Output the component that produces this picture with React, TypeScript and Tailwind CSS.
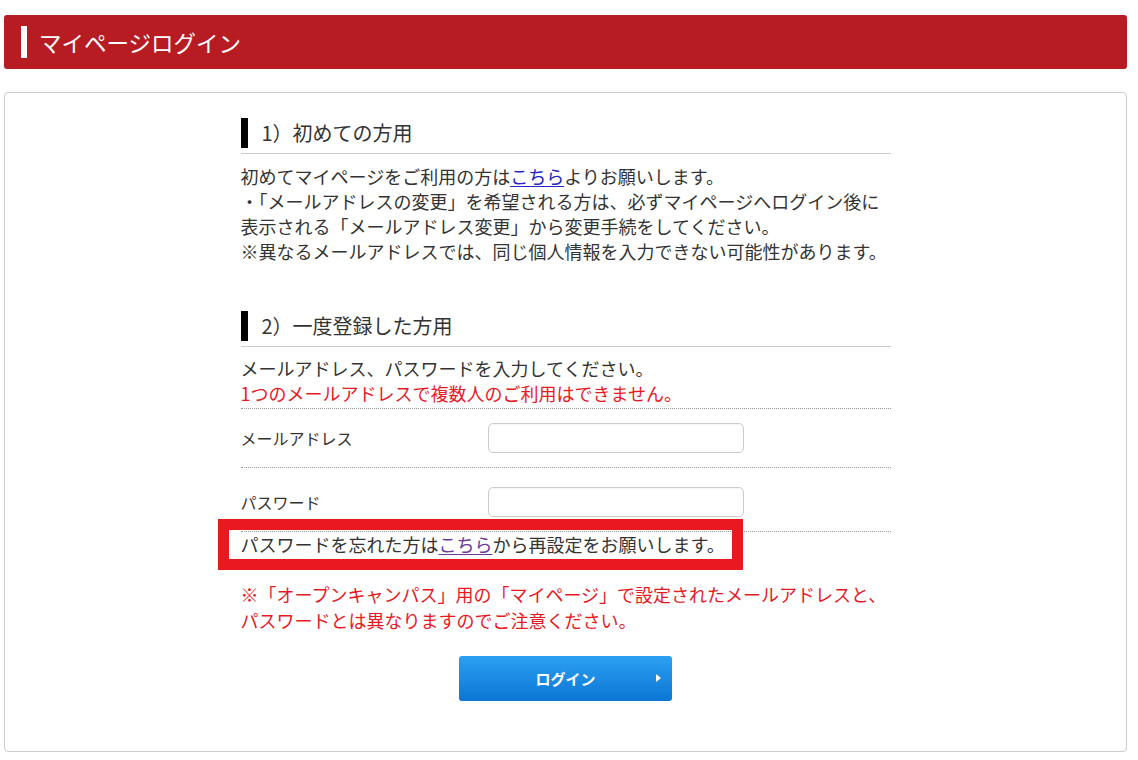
const FONT = "font-['Noto_Sans_CJK_JP','Noto_Sans',sans-serif]";

function SectionHeading({ children }: { children: React.ReactNode }) {
  return (
    <h3 className="border-b border-[#cccccc] pb-[5px]">
      <span className="flex items-center">
        <span className="h-[30px] w-[7px] bg-black" />
        <span className="ml-[14px] text-[20px] leading-[30px] text-[#333333]">
          {children}
        </span>
      </span>
    </h3>
  );
}

function FieldRow({
  label,
  type,
  className,
}: {
  label: string;
  type: string;
  className: string;
}) {
  return (
    <div
      className={`flex items-center border-b border-dotted border-[#999999] ${className}`}
    >
      <label className="w-[247px] text-[16px] leading-[24px] text-[#333333]">
        {label}
      </label>
      <input
        type={type}
        className="h-[30px] w-[256px] rounded-[5px] border border-[#cccccc] bg-white shadow-[inset_0_1px_1px_rgba(0,0,0,0.04)] outline-none"
      />
    </div>
  );
}

export default function App() {
  return (
    <div className={`${FONT} min-h-[760px] bg-white`}>
      <div className="ml-[4px] w-[1123px] pt-[15px]">
        <h2 className="flex h-[54px] items-center rounded-[3px] bg-[#b71c23] pl-[17px]">
          <span className="h-[32px] w-[6px] bg-white" />
          <span className="ml-[12px] text-[22.5px] leading-[32px] text-white">
            マイページログイン
          </span>
        </h2>

        <div className="mt-[23px] rounded-[4px] border border-[#cccccc] pb-[50px] pt-[25px]">
          <div className="mx-auto w-[650px] text-[18px] leading-[25px] text-[#333333]">
            <SectionHeading>1）初めての方用</SectionHeading>
            <p className="mt-[10px]">
              初めてマイページをご利用の方は
              <a href="#" className="text-[#2424c8] underline underline-offset-2">
                こちら
              </a>
              よりお願いします。
              <br />
              ・「メールアドレスの変更」を希望される方は、必ずマイページへログイン後に
              <br />
              表示される「メールアドレス変更」から変更手続をしてください。
              <br />
              ※異なるメールアドレスでは、同じ個人情報を入力できない可能性があります。
            </p>

            <div className="mt-[47px]">
              <SectionHeading>2）一度登録した方用</SectionHeading>
            </div>
            <p className="mt-[9px] border-b border-dotted border-[#999999] pb-[2px]">
              メールアドレス、パスワードを入力してください。
              <br />
              <span className="text-[#e8191f]">
                1つのメールアドレスで複数人のご利用はできません。
              </span>
            </p>

            <FieldRow label="メールアドレス" type="email" className="py-[14px]" />
            <FieldRow label="パスワード" type="password" className="pb-[14px] pt-[19px]" />

            <div className="relative">
              <p>
                パスワードを忘れた方は
                <a href="#" className="text-[#6a3a9e] underline underline-offset-2">
                  こちら
                </a>
                から再設定をお願いします。
              </p>
              <span
                aria-hidden="true"
                className="pointer-events-none absolute -bottom-[13px] -left-[23px] -top-[13px] w-[525px] border-[11px] border-[#e8191f]"
              />
            </div>

            <p className="mt-[24px] leading-[26px] text-[#e8191f]">
              ※「オープンキャンパス」用の「マイページ」で設定されたメールアドレスと、
              <br />
              パスワードとは異なりますのでご注意ください。
            </p>

            <div className="mt-[23px] flex justify-center">
              <button
                type="button"
                className="relative flex h-[45px] w-[213px] items-center justify-center rounded-[3px] bg-gradient-to-b from-[#2ba0f2] to-[#0a76d4] text-[15px] font-bold text-white"
              >
                ログイン
                <span className="absolute right-[11px] top-[18px] h-0 w-0 border-y-[4px] border-l-[5px] border-y-transparent border-l-white" />
              </button>
            </div>
          </div>
        </div>
      </div>
    </div>
  );
}
